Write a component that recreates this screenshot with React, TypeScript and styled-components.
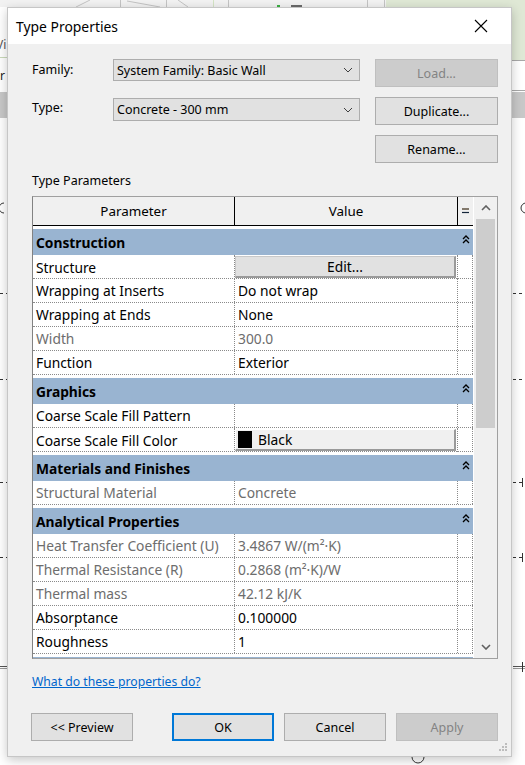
import React from "react";
import styled, { createGlobalStyle } from "styled-components";

const FONT = `"Noto Sans", "Open Sans", "Liberation Sans", sans-serif`;

const GlobalStyle = createGlobalStyle`
  html, body { margin: 0; padding: 0; background: #ffffff; }
  body { font-family: ${FONT}; color: #000; }
  * { box-sizing: border-box; }
`;

const Page = styled.div`
  position: relative;
  width: 525px;
  height: 765px;
  overflow: hidden;
  background: #ffffff;
`;

const Backdrop = styled.svg`
  position: absolute;
  left: 0;
  top: 0;
`;

const Dialog = styled.div`
  position: absolute;
  left: 7px;
  top: 7px;
  width: 505px;
  height: 750px;
  background: #f0f0f0;
  border: 1px solid #c6c6c6;
  box-shadow: 0 3px 10px rgba(0, 0, 0, 0.22);
  display: flex;
  flex-direction: column;
`;

const TitleBar = styled.div`
  height: 36px;
  background: #ffffff;
  display: flex;
  align-items: center;
  padding-left: 8px;
  flex: none;
`;

const Title = styled.div`
  font-size: 13.9px;
  color: #000;
`;

const CloseBox = styled.div`
  margin-left: auto;
  width: 37px;
  height: 36px;
  display: flex;
  align-items: center;
  justify-content: flex-start;
`;

const Body = styled.div`
  flex: 1;
  padding: 15px 13px 0 24px;
  display: flex;
  flex-direction: column;
`;

const FormGrid = styled.div`
  display: grid;
  grid-template-columns: 66px 247px 123px;
  grid-template-rows: 28px 28px 28px;
  column-gap: 15px;
  row-gap: 10px;
`;

const Label = styled.div`
  font-size: 12.5px;
  line-height: 22px;
  height: 22px;
`;

const Combo = styled.div<{ $offset?: number }>`
  height: ${(p) => (p.$offset ? 23 : 22)}px;
  margin-top: ${(p) => p.$offset ?? 0}px;
  background: #e1e1e1;
  border: 1px solid #adadad;
  display: flex;
  align-items: center;
  padding: 0 6px 0 3px;
  font-size: 12.5px;
`;

const ComboText = styled.span`
  flex: 1;
`;

const Button = styled.div<{ $disabled?: boolean; $default?: boolean }>`
  height: 28px;
  display: flex;
  align-items: center;
  justify-content: center;
  font-size: 12.5px;
  background: ${(p) => (p.$disabled ? "#cccccc" : "#e1e1e1")};
  color: ${(p) => (p.$disabled ? "#838383" : "#000")};
  border: ${(p) =>
    p.$default ? "2px solid #0078d7" : p.$disabled ? "1px solid #bfbfbf" : "1px solid #adadad"};
`;

const RenameSlot = styled(Button)`
  grid-column: 3;
`;

const SectionLabel = styled.div`
  margin-top: 10px;
  margin-bottom: 7px;
  font-size: 12.5px;
  line-height: 16px;
`;

const Frame = styled.div`
  height: 463px;
  border: 1px solid #a0a0a0;
  border-left-color: #828282;
  display: flex;
  flex: none;
`;

const Table = styled.div`
  width: 440px;
  flex: none;
  background: #ffffff;
  overflow: hidden;
  display: flex;
  flex-direction: column;
`;

const HeaderRow = styled.div`
  display: grid;
  grid-template-columns: 202px 223px 15px;
  height: 29px;
  flex: none;
  border-bottom: 1px solid #000;
  background: #f0f0f0;
`;

const HeaderCell = styled.div<{ $last?: boolean }>`
  display: flex;
  align-items: center;
  justify-content: center;
  font-size: 13.4px;
  border-right: ${(p) => (p.$last ? "none" : "1px solid #000")};
`;

const GroupRow = styled.div`
  margin-top: 3px;
  height: 26px;
  flex: none;
  background: #99b4d1;
  display: grid;
  grid-template-columns: 425px 15px;
`;

const GroupTitle = styled.div`
  font-size: 13.8px;
  font-weight: 700;
  padding-left: 3px;
  display: flex;
  align-items: center;
`;

const GroupToggle = styled.div`
  display: flex;
  align-items: flex-start;
  justify-content: center;
  padding-top: 6px;
`;

const Row = styled.div`
  display: grid;
  grid-template-columns: 202px 223px 15px;
  height: 24px;
  flex: none;
  border-bottom: 1px dotted #8a8a8a;
`;

const Cell = styled.div<{ $muted?: boolean }>`
  border-right: 1px dotted #8a8a8a;
  font-size: 13.8px;
  color: ${(p) => (p.$muted ? "#6d6d6d" : "#000")};
  padding-left: 3px;
  display: flex;
  align-items: center;
  white-space: nowrap;
  overflow: hidden;
`;

const ButtonCell = styled.div`
  border-right: 1px dotted #8a8a8a;
  padding: 1px 1px 1px 0;
  display: flex;
`;

const CellButton = styled.div<{ $light?: boolean }>`
  flex: 1;
  display: flex;
  align-items: center;
  justify-content: ${(p) => (p.$light ? "flex-start" : "center")};
  gap: 6px;
  padding-left: ${(p) => (p.$light ? "2px" : "0")};
  font-size: 13.8px;
  background: ${(p) => (p.$light ? "#f0f0f0" : "#e1e1e1")};
  border-top: 1px solid ${(p) => (p.$light ? "#ffffff" : "#c8c8c8")};
  border-left: 1px solid ${(p) => (p.$light ? "#ffffff" : "#c8c8c8")};
  border-right: 2px solid #9a9a9a;
  border-bottom: 2px solid #9a9a9a;
`;

const Swatch = styled.span`
  width: 14px;
  height: 17px;
  background: #000;
  flex: none;
`;

const Scrollbar = styled.div`
  width: 24px;
  flex: none;
  background: #f0f0f0;
  border-left: 1px solid #ffffff;
  display: flex;
  flex-direction: column;
`;

const ScrollArrow = styled.div`
  height: 22px;
  flex: none;
  display: flex;
  align-items: center;
  justify-content: center;
`;

const Track = styled.div`
  flex: 1;
  padding: 0 2px;
`;

const Thumb = styled.div`
  height: 209px;
  background: #cdcdcd;
`;

const HelpLink = styled.a`
  margin-top: 15px;
  font-size: 12.2px;
  line-height: 16px;
  color: #0066cc;
  text-decoration: underline;
  align-self: flex-start;
  cursor: pointer;
`;

const ButtonBar = styled.div`
  margin-top: 23px;
  display: flex;
  gap: 10px;
`;

const BarButton = styled(Button)<{ $push?: boolean }>`
  width: 102px;
  margin-left: ${(p) => (p.$push ? "auto" : "0")};
`;

const PreviewButton = styled(Button)`
  width: 102px;
  margin-left: -1px;
`;

const Grip = styled.svg`
  position: absolute;
  right: 3px;
  bottom: 4px;
`;

const ChevronDown = () => (
  <svg width="10" height="6" viewBox="0 0 10 6">
    <path d="M1 1 L5 5 L9 1" fill="none" stroke="#404040" strokeWidth="1" />
  </svg>
);

const DoubleCaret = () => (
  <svg width="8" height="9" viewBox="0 0 8 9">
    <path d="M1 4 L4 1 L7 4 M1 8 L4 5 L7 8" fill="none" stroke="#000" strokeWidth="1.3" />
  </svg>
);

type Value =
  | { kind: "text"; text: string }
  | { kind: "edit" }
  | { kind: "color"; text: string };

interface Param {
  name: string;
  value: Value;
  muted?: boolean;
}

interface Group {
  title: string;
  params: Param[];
}

const t = (text: string): Value => ({ kind: "text", text });

const groups: Group[] = [
  {
    title: "Construction",
    params: [
      { name: "Structure", value: { kind: "edit" } },
      { name: "Wrapping at Inserts", value: t("Do not wrap") },
      { name: "Wrapping at Ends", value: t("None") },
      { name: "Width", value: t("300.0"), muted: true },
      { name: "Function", value: t("Exterior") },
    ],
  },
  {
    title: "Graphics",
    params: [
      { name: "Coarse Scale Fill Pattern", value: t("") },
      { name: "Coarse Scale Fill Color", value: { kind: "color", text: "Black" } },
    ],
  },
  {
    title: "Materials and Finishes",
    params: [{ name: "Structural Material", value: t("Concrete"), muted: true }],
  },
  {
    title: "Analytical Properties",
    params: [
      { name: "Heat Transfer Coefficient (U)", value: t("3.4867 W/(m²·K)"), muted: true },
      { name: "Thermal Resistance (R)", value: t("0.2868 (m²·K)/W"), muted: true },
      { name: "Thermal mass", value: t("42.12 kJ/K"), muted: true },
      { name: "Absorptance", value: t("0.100000") },
      { name: "Roughness", value: t("1") },
    ],
  },
];

const ValueCell = ({ p }: { p: Param }) => {
  if (p.value.kind === "edit")
    return (
      <ButtonCell>
        <CellButton>Edit...</CellButton>
      </ButtonCell>
    );
  if (p.value.kind === "color")
    return (
      <ButtonCell>
        <CellButton $light>
          <Swatch />
          {p.value.text}
        </CellButton>
      </ButtonCell>
    );
  return <Cell $muted={p.muted}>{p.value.text}</Cell>;
};

const CanvasArt = () => (
  <Backdrop width="525" height="765" viewBox="0 0 525 765">
    <rect x="0" y="0" width="525" height="765" fill="#ffffff" />
    <rect x="0" y="0" width="525" height="7" fill="#f2f2f2" />
    <rect x="386" y="0" width="139" height="60" fill="#dfe8d5" />
    <g stroke="#c4c4c4" strokeWidth="1">
      <line x1="120.5" y1="0" x2="120.5" y2="7" />
      <line x1="166.5" y1="0" x2="166.5" y2="7" />
      <line x1="228.5" y1="0" x2="228.5" y2="7" />
      <line x1="367.5" y1="0" x2="367.5" y2="7" />
      <line x1="384.5" y1="0" x2="384.5" y2="60" />
      <line x1="76" y1="7" x2="90" y2="0" />
      <line x1="127" y1="1" x2="160" y2="7" />
      <line x1="178" y1="0" x2="188" y2="7" />
    </g>
    <line x1="213.5" y1="0" x2="213.5" y2="7" stroke="#d4e4c4" />
    <rect x="277" y="5" width="3" height="2" fill="#3cb043" />
    <rect x="291" y="5" width="11" height="2" fill="#6a6a6a" />
    <line x1="0" y1="57.5" x2="7" y2="57.5" stroke="#c9d9b9" />
    <text x="-4" y="49" fontSize="12" fill="#555" fontFamily="Noto Sans, sans-serif">Vi</text>
    <text x="-3" y="80" fontSize="12" fill="#222" fontFamily="Noto Sans, sans-serif">ir</text>
    <rect x="0" y="92" width="525" height="26" fill="#c8c8c8" />
    <rect x="508.5" y="60.5" width="20" height="30" fill="#ffffff" stroke="#a8a8a8" />
    <path d="M4 203 A5 5 0 0 0 4 213" fill="none" stroke="#333" strokeWidth="1" />
    <path d="M526 203 A5 5 0 0 0 526 213" fill="none" stroke="#333" strokeWidth="1" />
    <g stroke="#333" strokeWidth="1" strokeDasharray="3 3">
      {[293, 379, 482, 557].map((y) => (
        <React.Fragment key={y}>
          <line x1="0" y1={y + 0.5} x2="7" y2={y + 0.5} />
          <line x1="513" y1={y + 0.5} x2="522" y2={y + 0.5} />
        </React.Fragment>
      ))}
    </g>
    <line x1="0" y1="666.5" x2="7" y2="666.5" stroke="#555" />
    <line x1="0" y1="668.5" x2="7" y2="668.5" stroke="#999" />
    <line x1="513" y1="666.5" x2="525" y2="666.5" stroke="#555" />
    <line x1="513" y1="668.5" x2="525" y2="668.5" stroke="#999" />
    <line x1="522.5" y1="662" x2="522.5" y2="672" stroke="#333" />
    <line x1="522.5" y1="478" x2="522.5" y2="487" stroke="#333" />
    <line x1="522.5" y1="553" x2="522.5" y2="562" stroke="#333" />
    <path d="M412 757 A6 6 0 0 0 424 757" fill="none" stroke="#333" strokeWidth="1" />
  </Backdrop>
);

export default function App() {
  return (
    <>
      <GlobalStyle />
      <Page>
        <CanvasArt />
        <Dialog>
          <TitleBar>
            <Title>Type Properties</Title>
            <CloseBox>
              <svg width="14" height="14" viewBox="0 0 14 14">
                <path d="M1 1 L13 13 M13 1 L1 13" stroke="#000" strokeWidth="1.1" fill="none" />
              </svg>
            </CloseBox>
          </TitleBar>
          <Body>
            <FormGrid>
              <Label>Family:</Label>
              <Combo>
                <ComboText>System Family: Basic Wall</ComboText>
                <ChevronDown />
              </Combo>
              <Button $disabled>Load...</Button>
              <Label>Type:</Label>
              <Combo $offset={1}>
                <ComboText>Concrete - 300 mm</ComboText>
                <ChevronDown />
              </Combo>
              <Button>Duplicate...</Button>
              <RenameSlot>Rename...</RenameSlot>
            </FormGrid>
            <SectionLabel>Type Parameters</SectionLabel>
            <Frame>
              <Table>
                <HeaderRow>
                  <HeaderCell>Parameter</HeaderCell>
                  <HeaderCell>Value</HeaderCell>
                  <HeaderCell $last>
                    <svg width="8" height="6" viewBox="0 0 8 6">
                      <line x1="0" y1="1" x2="7" y2="1" stroke="#3a2a14" strokeWidth="1.2" />
                      <line x1="0" y1="4.5" x2="7" y2="4.5" stroke="#14263a" strokeWidth="1.2" />
                    </svg>
                  </HeaderCell>
                </HeaderRow>
                {groups.map((g) => (
                  <React.Fragment key={g.title}>
                    <GroupRow>
                      <GroupTitle>{g.title}</GroupTitle>
                      <GroupToggle>
                        <DoubleCaret />
                      </GroupToggle>
                    </GroupRow>
                    {g.params.map((p) => (
                      <Row key={p.name}>
                        <Cell $muted={p.muted}>{p.name}</Cell>
                        <ValueCell p={p} />
                        <Cell />
                      </Row>
                    ))}
                  </React.Fragment>
                ))}
                <GroupRow aria-hidden="true" />
              </Table>
              <Scrollbar>
                <ScrollArrow>
                  <svg width="10" height="6" viewBox="0 0 10 6">
                    <path d="M1 5 L5 1 L9 5" fill="none" stroke="#606060" strokeWidth="1.6" />
                  </svg>
                </ScrollArrow>
                <Track>
                  <Thumb />
                </Track>
                <ScrollArrow>
                  <svg width="10" height="6" viewBox="0 0 10 6">
                    <path d="M1 1 L5 5 L9 1" fill="none" stroke="#606060" strokeWidth="1.6" />
                  </svg>
                </ScrollArrow>
              </Scrollbar>
            </Frame>
            <HelpLink>What do these properties do?</HelpLink>
            <ButtonBar>
              <PreviewButton>&lt;&lt; Preview</PreviewButton>
              <BarButton $push $default>OK</BarButton>
              <BarButton>Cancel</BarButton>
              <BarButton $disabled>Apply</BarButton>
            </ButtonBar>
          </Body>
          <Grip width="10" height="10" viewBox="0 0 10 10">
            {[
              [7, 1],
              [4, 4],
              [7, 4],
              [1, 7],
              [4, 7],
              [7, 7],
            ].map(([x, y]) => (
              <rect key={`${x}-${y}`} x={x} y={y} width="2" height="2" fill="#bdbdbd" />
            ))}
          </Grip>
        </Dialog>
      </Page>
    </>
  );
}
